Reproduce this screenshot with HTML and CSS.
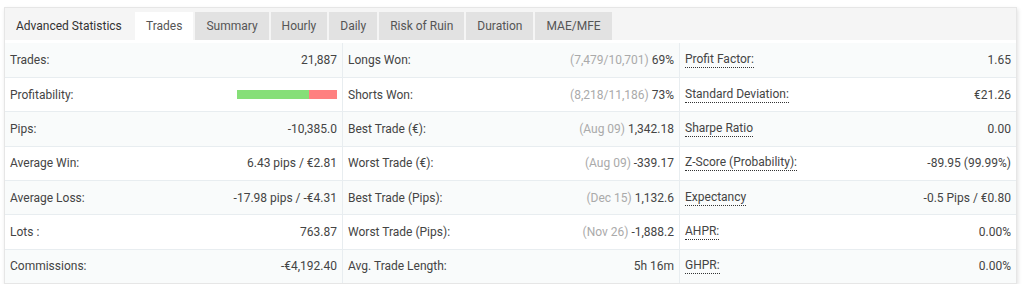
FILE: index.html
```html
<!DOCTYPE html>
<html lang="en">
<head>
    <meta charset="UTF-8">
    <title>Advanced Statistics</title>
    <link rel="stylesheet" href="styles.css">
</head>
<body>
    <div class="panel">
        <div class="panel-head">
            <span class="panel-title">Advanced Statistics</span>
            <ul class="tabs">
                <li class="tab active">Trades</li>
                <li class="tab">Summary</li>
                <li class="tab">Hourly</li>
                <li class="tab">Daily</li>
                <li class="tab">Risk of Ruin</li>
                <li class="tab">Duration</li>
                <li class="tab">MAE/MFE</li>
            </ul>
        </div>

        <div class="stats">
            <div class="row">
                <div class="cell"><span>Trades:</span><span>21,887</span></div>
                <div class="cell"><span>Longs Won:</span><span><span class="muted">(7,479/10,701)</span> 69%</span></div>
                <div class="cell"><span class="tip">Profit Factor:</span><span>1.65</span></div>
            </div>
            <div class="row">
                <div class="cell"><span>Profitability:</span>
                    <span class="ratio"><span class="won" style="width: 72%"></span><span class="lost"></span></span>
                </div>
                <div class="cell"><span>Shorts Won:</span><span><span class="muted">(8,218/11,186)</span> 73%</span></div>
                <div class="cell"><span class="tip">Standard Deviation:</span><span>€21.26</span></div>
            </div>
            <div class="row">
                <div class="cell"><span>Pips:</span><span>-10,385.0</span></div>
                <div class="cell"><span>Best Trade (€):</span><span><span class="muted">(Aug 09)</span> 1,342.18</span></div>
                <div class="cell"><span class="tip">Sharpe Ratio</span><span>0.00</span></div>
            </div>
            <div class="row">
                <div class="cell"><span>Average Win:</span><span>6.43 pips / €2.81</span></div>
                <div class="cell"><span>Worst Trade (€):</span><span><span class="muted">(Aug 09)</span> -339.17</span></div>
                <div class="cell"><span class="tip">Z-Score (Probability):</span><span>-89.95 (99.99%)</span></div>
            </div>
            <div class="row">
                <div class="cell"><span>Average Loss:</span><span>-17.98 pips / -€4.31</span></div>
                <div class="cell"><span>Best Trade (Pips):</span><span><span class="muted">(Dec 15)</span> 1,132.6</span></div>
                <div class="cell"><span class="tip">Expectancy</span><span>-0.5 Pips / €0.80</span></div>
            </div>
            <div class="row">
                <div class="cell"><span>Lots :</span><span>763.87</span></div>
                <div class="cell"><span>Worst Trade (Pips):</span><span><span class="muted">(Nov 26)</span> -1,888.2</span></div>
                <div class="cell"><span class="tip">AHPR:</span><span>0.00%</span></div>
            </div>
            <div class="row">
                <div class="cell"><span>Commissions:</span><span>-€4,192.40</span></div>
                <div class="cell"><span>Avg. Trade Length:</span><span>5h 16m</span></div>
                <div class="cell"><span class="tip">GHPR:</span><span>0.00%</span></div>
            </div>
        </div>
    </div>
</body>
</html>
```

FILE: styles.css
```css
* {
    box-sizing: border-box;
    margin: 0;
    padding: 0;
}

body {
    font-family: Roboto, "Liberation Sans", sans-serif;
    font-size: 12px;
    color: #444;
    background: #fff;
    padding: 7px 11px 0 4px;
}

.panel {
    border: 1px solid #e6e6e6;
    box-shadow: 1px 2px 4px rgba(0, 0, 0, 0.12);
    background: #fff;
}

.panel-head {
    display: flex;
    align-items: flex-end;
    background: #f5f5f5;
    height: 32px;
}

.panel-title {
    width: 130px;
    padding-left: 11px;
    line-height: 28px;
    color: #333;
}

.tabs {
    display: flex;
    gap: 2px;
    list-style: none;
}

.tab {
    background: #e2e2e2;
    color: #555;
    line-height: 28px;
    padding: 0 11px;
}

.tab.active {
    background: #fff;
}

.stats {
    padding-top: 3px;
}

.row {
    display: grid;
    grid-template-columns: repeat(3, 1fr);
    border-top: 1px solid #e8edf0;
}

.row:first-child {
    border-top: none;
}

.row:nth-child(odd) {
    background: #f9fbfb;
}

.cell {
    display: flex;
    justify-content: space-between;
    align-items: center;
    height: 33.33px;
    padding: 0 5px;
    border-left: 1px solid #e8edf0;
}

.row:first-child .cell {
    height: 34px;
}

.cell:first-child {
    border-left: none;
}

.muted {
    color: #aaa;
}

.tip {
    border-bottom: 1px dotted #333;
    line-height: 15px;
}

.ratio {
    display: flex;
    width: 100px;
    height: 9px;
}

.won {
    background: #86df78;
}

.lost {
    flex: 1;
    background: #ff8080;
}
```
